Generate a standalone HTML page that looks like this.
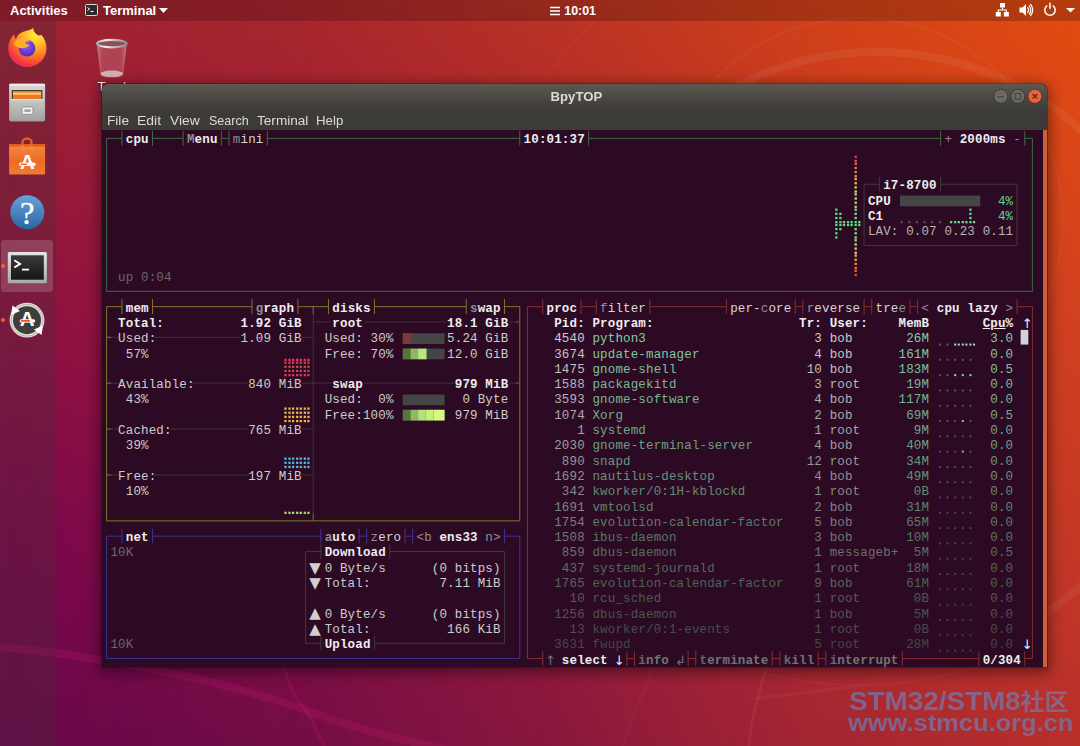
<!DOCTYPE html>
<html lang="en"><head><meta charset="utf-8"><title>BpyTOP</title>
<style>
*{margin:0;padding:0;box-sizing:border-box}
html,body{width:1080px;height:746px;overflow:hidden}
body{position:relative;font-family:"Liberation Sans",sans-serif;background:linear-gradient(to bottom,#a02231 0%,#8c1042 48%,#7c084a 72%,#6a084a 100%)}
#bgr{position:absolute;left:0;top:0;width:1080px;height:746px;background:linear-gradient(to bottom,#e24c10 0%,#d04020 45%,#b8302a 100%);-webkit-mask-image:linear-gradient(to right,rgba(0,0,0,0) 0%,rgba(0,0,0,0.05) 14%,rgba(0,0,0,0.135) 28%,rgba(0,0,0,0.385) 50%,rgba(0,0,0,0.72) 74%,rgba(0,0,0,1) 100%);mask-image:linear-gradient(to right,rgba(0,0,0,0) 0%,rgba(0,0,0,0.05) 14%,rgba(0,0,0,0.135) 28%,rgba(0,0,0,0.385) 50%,rgba(0,0,0,0.72) 74%,rgba(0,0,0,1) 100%)}
.abs{position:absolute}
#wall{position:absolute;left:0;top:0;width:1080px;height:746px}
#topbar{position:absolute;left:0;top:0;width:1080px;height:20.5px;background:rgba(0,0,0,0.2);color:#fff;font-size:13px;font-weight:bold}
#topbar span{position:absolute;top:0.8px;height:20px;line-height:20px;white-space:pre}
#dock{position:absolute;left:0;top:20.5px;width:55.5px;height:726px;background:rgba(70,45,60,0.3)}
#win{position:absolute;left:102px;top:84.3px;width:944.8px;height:582.3px;border-radius:6px 6px 0 0;
 box-shadow:0 3px 13px 3px rgba(0,0,0,0.42), 0 0 0 0.6px rgba(30,10,10,0.5);background:#2d0a23;overflow:hidden}
#titlebar{position:absolute;left:0;top:0;width:100%;height:26px;background:linear-gradient(#5b5952 0%,#524f49 30%,#46443f 68%,#3d3c38 100%);}
#title{position:absolute;left:0;width:100%;top:0.5px;height:26px;line-height:25px;text-align:center;color:#dfdbd2;font-weight:bold;font-size:12.6px;padding-left:4px;transform:scaleX(1.045);transform-origin:474px 0}
#menubar{position:absolute;left:0;top:26px;width:100%;height:19.9px;background:#3c3b37;color:#dfdbd2;font-size:12.6px}
#menubar span{position:absolute;top:0.4px;line-height:20px;white-space:pre;transform-origin:0 0}
#sb{position:absolute;right:0;top:45.9px;width:4.3px;bottom:0;background:#cd6038}
.tsvg{position:absolute;left:0;top:0}
.tt{position:absolute;left:0;top:0;width:1080px;height:746px;font-family:"Liberation Mono","DejaVu Sans Mono",monospace}
.wm{line-height:1;position:absolute;color:rgba(98,142,205,0.57);font-weight:bold;white-space:pre;transform-origin:0 0;font-family:"Liberation Sans","Noto Sans CJK SC",sans-serif}

.t{position:absolute;white-space:pre;height:15.3px;line-height:16.5px;font-size:12.5px;letter-spacing:0.1498px;}
</style></head><body>
<div id="bgr"></div>
<svg id="wall" viewBox="0 0 1080 746">
 <g fill="none" stroke="#ffffff">
  <circle cx="860" cy="300" r="385" stroke-opacity="0.035" stroke-width="1.5"/>
  <circle cx="860" cy="221" r="203" stroke-opacity="0.05" stroke-width="1.5"/>
  <circle cx="877" cy="358" r="306" stroke-opacity="0.06" stroke-width="8"/>
  <path d="M0 647 C 60 652 200 672 305 710 S 430 740 480 762" stroke="#d01878" stroke-opacity="0.22" stroke-width="8"/>
  <path d="M283 664 C 290 690 300 705 308 713 L 326 750" stroke="#d01878" stroke-opacity="0.2" stroke-width="3"/>
  <path d="M767 664 C 760 690 752 715 748 750" stroke-opacity="0.05" stroke-width="3"/>
  <path d="M753 699 C 790 694 830 690 870 684" stroke-opacity="0.04" stroke-width="3"/>
  <path d="M656 664 C 640 700 630 720 622 750" stroke-opacity="0.03" stroke-width="2"/>
 </g>
</svg>
<div id="topbar">
 <span style="left:10px">Activities</span>
 <svg class="abs" style="left:85px;top:4px" width="13" height="12" viewBox="0 0 13 12"><rect x="0.5" y="0.5" width="12" height="11" rx="1" fill="#2b2b2b" stroke="#d8d8d8"/><path d="M2.5 3.5l2 1.5-2 1.5M5.5 7.5h3" stroke="#fff" stroke-width="1" fill="none"/></svg>
 <span style="left:103px">Terminal</span>
 <svg class="abs" style="left:159px;top:8px" width="9" height="5" viewBox="0 0 9 5"><path d="M0 0h9L4.5 5z" fill="#fff"/></svg>
 <svg class="abs" style="left:550px;top:5.5px" width="10" height="10" viewBox="0 0 10 10"><path d="M0 1.5h10M0 5h10M0 8.5h10" stroke="#fff" stroke-width="1.4"/></svg>
 <span style="left:564.3px;font-size:12.4px">10:01</span>
 <svg class="abs" style="left:995px;top:3px" width="15" height="14" viewBox="0 0 15 14"><g fill="#fff"><rect x="5" y="0" width="5" height="4.5"/><rect x="0.8" y="9" width="5" height="4.5"/><rect x="8.8" y="9" width="5" height="4.5"/></g><path d="M7.5 4.5v2.5M3.3 9V7h8v2" stroke="#fff" stroke-width="1.2" fill="none"/></svg>
 <svg class="abs" style="left:1019px;top:3px" width="15" height="14" viewBox="0 0 15 14"><path d="M0.5 4.5h3L7 1v12L3.5 9.5h-3z" fill="#fff"/><path d="M8.4 4.4a3.8 3.8 0 0 1 0 5.2M9.9 2.6a6.2 6.2 0 0 1 0 8.8M11.3 1a8.6 8.6 0 0 1 0 12" stroke="#fff" stroke-width="1.3" fill="none"/></svg>
 <svg class="abs" style="left:1043px;top:2px" width="14" height="15" viewBox="0 0 14 15"><path d="M4.3 3.6a5.2 5.2 0 1 0 5.4 0" stroke="#fff" stroke-width="1.5" fill="none"/><path d="M7 0.8v6" stroke="#fff" stroke-width="1.6"/></svg>
 <svg class="abs" style="left:1065.5px;top:7.5px" width="9" height="5" viewBox="0 0 9 5"><path d="M0 0h9L4.5 4.6z" fill="#fff"/></svg>
</div>
<div id="dock">
 <div class="abs" style="left:1.2px;top:219.2px;width:52.1px;height:52.5px;border-radius:3px;background:rgba(255,255,255,0.16)"></div>
 <div class="abs" style="left:0.6px;top:243.2px;width:4.6px;height:4.6px;border-radius:2.3px;background:#f0602a"></div>
 <div class="abs" style="left:0.6px;top:297.4px;width:4.6px;height:4.6px;border-radius:2.3px;background:#f0602a"></div>
</div>
<!-- dock icons -->
<svg class="abs" style="left:0;top:0" width="140" height="350" viewBox="0 0 140 350">
 <defs>
  <radialGradient id="ffo" cx="0.72" cy="0.16" r="1.0"><stop offset="0" stop-color="#fff23a"/><stop offset="0.28" stop-color="#ffbd2a"/><stop offset="0.55" stop-color="#ff7a22"/><stop offset="0.8" stop-color="#f5363f"/><stop offset="1" stop-color="#e01f86"/></radialGradient>
  <radialGradient id="ffp" cx="0.45" cy="0.35" r="0.7"><stop offset="0" stop-color="#9a5cf5"/><stop offset="0.6" stop-color="#6a3bd6"/><stop offset="1" stop-color="#3f2aa8"/></radialGradient>
  <linearGradient id="fl" x1="0" y1="0" x2="0" y2="1"><stop offset="0" stop-color="#d9d9d7"/><stop offset="1" stop-color="#9c9c9a"/></linearGradient>
  <linearGradient id="fl2" x1="0" y1="0" x2="0" y2="1"><stop offset="0" stop-color="#c9c9c7"/><stop offset="1" stop-color="#a2a2a0"/></linearGradient>
  <linearGradient id="sw" x1="0" y1="0" x2="0" y2="1"><stop offset="0" stop-color="#f28a46"/><stop offset="0.55" stop-color="#ee6c25"/><stop offset="1" stop-color="#f07a34"/></linearGradient>
  <linearGradient id="hp" x1="0" y1="0" x2="0" y2="1"><stop offset="0" stop-color="#65a3d8"/><stop offset="1" stop-color="#2b66a4"/></linearGradient>
  <linearGradient id="tm" x1="0" y1="0" x2="0" y2="1"><stop offset="0" stop-color="#3a3a3a"/><stop offset="1" stop-color="#161616"/></linearGradient>
  <linearGradient id="tf" x1="0" y1="0" x2="0" y2="1"><stop offset="0" stop-color="#e4e4e2"/><stop offset="1" stop-color="#a8a8a4"/></linearGradient>
  <linearGradient id="tr" x1="0" y1="0" x2="1" y2="0"><stop offset="0" stop-color="#e8c8cc" stop-opacity="0.55"/><stop offset="0.18" stop-color="#d08890" stop-opacity="0.35"/><stop offset="0.5" stop-color="#d89098" stop-opacity="0.30"/><stop offset="0.82" stop-color="#d08890" stop-opacity="0.35"/><stop offset="1" stop-color="#e8c8cc" stop-opacity="0.55"/></linearGradient>
  <linearGradient id="rim" x1="0" y1="0" x2="1" y2="0"><stop offset="0" stop-color="#a8a8a8"/><stop offset="0.3" stop-color="#f0f0f0"/><stop offset="0.6" stop-color="#bcbcbc"/><stop offset="1" stop-color="#8c8c8c"/></linearGradient>
 </defs>
 <!-- firefox -->
 <path d="M33.200 28.100c.2 3 1.600 5 3.600 6.500 1.300 1 3 1.200 4.400.2 3.300 3.500 5.300 8.200 5.300 13.400C46.500 58.700 38 67 27.300 67S8.100 58.700 8.100 48.200c0-5 2.200-9.800 6-13.900.2 2 .8 3.700 1.800 5 .9-3.600 3.300-6.200 6.600-7.400 3-1 7.600-1.200 10.700-3.800z" fill="url(#ffo)"/>
 <circle cx="27" cy="48.300" r="8.300" fill="url(#ffp)"/>
 <path d="M13.300 44.500c1.500-3.700 4.700-6 8.900-6.200 3.500-.2 6.200 1 8.400 3.400-2.300-.4-4.300 0-5.600 1.300 1.500.9 3.400 1.300 4.500 2.700-2 .5-3.500 2.600-6.600 2.600-4 0-6.800-1.400-9.600-3.800z" fill="#ffae2c"/>
 <!-- files -->
 <rect x="9.100" y="83.700" width="36" height="37.800" rx="2" fill="url(#fl)"/>
 <rect x="9.100" y="83.700" width="36" height="2" rx="1" fill="#ededeb"/>
 <rect x="11.800" y="90" width="30.600" height="9.500" fill="#4a3a30"/>
 <rect x="13" y="91.200" width="28.200" height="8" fill="#f39a3c"/>
 <rect x="13" y="93.300" width="28.200" height="1" fill="#fde6c8"/>
 <rect x="13" y="95" width="28.200" height="4.500" fill="#ea7a26"/>
 <rect x="10.400" y="99" width="33.400" height="21.600" rx="1.200" fill="url(#fl2)"/>
 <rect x="10.400" y="99" width="33.400" height="1.200" fill="#dededc"/>
 <rect x="22" y="107" width="11" height="7.300" rx="1.400" fill="#f4f4f2" stroke="#8a8a88" stroke-width="0.900"/>
 <rect x="24.300" y="109.400" width="6.400" height="2.400" fill="#9a9a98"/>
 <!-- software -->
 <path d="M22.500 150v-8a4.500 3.400 0 0 1 9 0v8" fill="none" stroke="#e2621f" stroke-width="2.300"/>
 <rect x="9.100" y="144" width="36" height="30.600" rx="0.800" fill="url(#sw)"/>
 <rect x="9.100" y="144" width="36" height="2.600" fill="#e0601c"/>
 <path d="M22.500 150v-4.500M31.500 150v-4.500" stroke="#f08a48" stroke-width="2.300"/>
 <text x="27.300" y="169" text-anchor="middle" font-family="Liberation Sans,sans-serif" font-weight="bold" font-size="20.500" fill="#fff">A</text>
 <rect x="19" y="162.600" width="16.600" height="3.400" rx="1.700" fill="#fff"/>
 <rect x="20.200" y="163.600" width="7" height="1.400" rx="0.700" fill="#ef6c25"/>
 <!-- help -->
 <circle cx="27.300" cy="212.200" r="17" fill="url(#hp)"/>
 <text x="27.300" y="224.300" text-anchor="middle" font-family="Liberation Serif,serif" font-size="32.500" fill="#fff" stroke="#fff" stroke-width="0.300">?</text>
 <!-- terminal -->
 <rect x="7.800" y="252" width="39.100" height="31.300" rx="1.500" fill="url(#tf)"/>
 <rect x="11" y="255.300" width="32.800" height="24.400" fill="url(#tm)"/>
 <path d="M14.300 260.300l5.800 3.600-5.800 3.600" stroke="#fff" stroke-width="1.900" fill="none"/><path d="M22 269.600h7" stroke="#fff" stroke-width="1.800"/>
 <!-- updater -->
 <circle cx="27" cy="320.200" r="17.400" fill="#deded9"/>
 <circle cx="27" cy="320.200" r="16" fill="none" stroke="#b8b8b2" stroke-width="1"/>
 <circle cx="27" cy="320.200" r="14" fill="#3f3e3a"/>
 <path d="M11 315l1.500-9.500 7.500 5.500zM43 325.500l-1.500 9.500-7.500-5.500z" fill="#fff"/>
 <text x="27.200" y="326.200" text-anchor="middle" font-family="Liberation Sans,sans-serif" font-weight="bold" font-size="20.500" fill="#fff">A</text>
 <rect x="19.600" y="319.300" width="15.600" height="3.200" rx="1.600" fill="#fff"/>
 <rect x="20.600" y="320.100" width="9.500" height="1.600" rx="0.800" fill="#f0501e"/>
 <!-- trash -->
 <path d="M97 45.500L100.400 74.500a11.400 3.600 0 0 0 22.800 0L126.600 45.500z" fill="url(#tr)"/>
 <ellipse cx="111.800" cy="73.800" rx="11.200" ry="3.300" fill="#d9c3c7" fill-opacity="0.85"/>
 <ellipse cx="111.800" cy="43.600" rx="14.800" ry="3.700" fill="#915058" stroke="url(#rim)" stroke-width="2.200"/>
</svg>
<div class="abs" style="left:97.4px;top:80.3px;color:#fff;font-size:13px;line-height:14px;text-shadow:0 1px 2px rgba(0,0,0,0.8)">Trash</div>
<div id="win">
 <div id="titlebar"></div>
 <div id="title">BpyTOP</div>
 <svg class="abs" style="left:888px;top:4px" width="54" height="18" viewBox="0 0 54 18">
  <circle cx="10.800" cy="8.300" r="7" fill="#6b6963" stroke="#34332f" stroke-width="0.800"/><path d="M7.600 8.800h6.400" stroke="#3f3e3a" stroke-width="1"/>
  <circle cx="27.900" cy="8.300" r="7" fill="#6b6963" stroke="#34332f" stroke-width="0.800"/><rect x="25.100" y="5.500" width="5.600" height="5.600" fill="none" stroke="#3f3e3a" stroke-width="1"/>
  <circle cx="44.900" cy="8.300" r="7" fill="#e9633c" stroke="#5a2c1c" stroke-width="0.800"/><path d="M42.600 6l4.600 4.600M47.200 6l-4.600 4.600" stroke="#4a2418" stroke-width="1.100"/>
 </svg>
 <div id="menubar"><span style="left:4.6px;transform:scaleX(1.083)">File</span><span style="left:34.9px;transform:scaleX(1.110)">Edit</span><span style="left:67.8px;transform:scaleX(1.10)">View</span><span style="left:106.5px;transform:scaleX(0.995)">Search</span><span style="left:155.1px;transform:scaleX(1.08)">Terminal</span><span style="left:214.3px;transform:scaleX(1.054)">Help</span></div>
 <div id="sb"></div>
</div>
<svg class="tsvg" width="1080" height="746" viewBox="0 0 1080 746">
<path d="M106.63 138.35L121.93 138.35M121.93 130.90L121.93 145.80M152.53 130.90L152.53 145.80M152.53 138.35L183.14 138.35M183.14 130.90L183.14 145.80M221.39 130.90L221.39 145.80M221.39 138.35L229.04 138.35M229.04 130.90L229.04 145.80M267.30 130.90L267.30 145.80M267.30 138.35L519.78 138.35M519.78 130.90L519.78 145.80M588.64 130.90L588.64 145.80M588.64 138.35L940.58 138.35M940.58 130.90L940.58 145.80M1024.75 130.90L1024.75 145.80M1024.75 138.35L1032.40 138.35M106.63 138.35L106.63 291.35M1032.40 138.35L1032.40 291.35M106.63 291.35L1032.40 291.35" stroke="#3d7b46" stroke-width="0.95" stroke-opacity="0.9" fill="none" stroke-linecap="butt"/>
<path d="M864.07 184.25L879.38 184.25M879.38 176.80L879.38 191.70M940.58 176.80L940.58 191.70M940.58 184.25L1017.09 184.25M864.07 184.25L864.07 245.45M1017.09 184.25L1017.09 245.45M864.07 245.45L1017.09 245.45M305.55 551.45L320.85 551.45M320.85 544.00L320.85 558.90M389.71 544.00L389.71 558.90M389.71 551.45L504.48 551.45M305.55 551.45L305.55 643.25M504.48 551.45L504.48 643.25M305.55 643.25L320.85 643.25M320.85 635.80L320.85 650.70M374.41 635.80L374.41 650.70M374.41 643.25L504.48 643.25" stroke="#424242" stroke-width="0.95" stroke-opacity="0.9" fill="none" stroke-linecap="butt"/>
<path d="M106.63 306.65L121.93 306.65M121.93 299.20L121.93 314.10M152.53 299.20L152.53 314.10M152.53 306.65L251.99 306.65M251.99 299.20L251.99 314.10M297.90 299.20L297.90 314.10M297.90 306.65L328.50 306.65M328.50 299.20L328.50 314.10M374.41 299.20L374.41 314.10M374.41 306.65L466.22 306.65M466.22 299.20L466.22 314.10M504.48 299.20L504.48 314.10M504.48 306.65L519.78 306.65M106.63 306.65L106.63 520.85M519.78 306.65L519.78 520.85M106.63 520.85L519.78 520.85M313.20 306.65L313.20 314.30M313.20 513.20L313.20 520.85M106.63 337.25L111.45 337.25M106.63 383.15L111.45 383.15M106.63 429.05L111.45 429.05M106.63 474.95L111.45 474.95M515.78 321.95L519.78 321.95M515.78 383.15L519.78 383.15" stroke="#8a882e" stroke-width="0.95" stroke-opacity="0.9" fill="none" stroke-linecap="butt"/>
<path d="M313.20 314.30L313.20 514.73M111.45 337.25L313.20 337.25M111.45 383.15L313.20 383.15M111.45 429.05L313.20 429.05M111.45 474.95L313.20 474.95M313.20 321.95L519.78 321.95M313.20 383.15L519.78 383.15" stroke="#3c3c3c" stroke-width="0.95" stroke-opacity="0.9" fill="none" stroke-linecap="butt"/>
<path d="M106.63 536.15L121.93 536.15M121.93 528.70L121.93 543.60M152.53 528.70L152.53 543.60M152.53 536.15L320.85 536.15M320.85 528.70L320.85 543.60M359.11 528.70L359.11 543.60M359.11 536.15L366.76 536.15M366.76 528.70L366.76 543.60M405.01 528.70L405.01 543.60M405.01 536.15L412.67 536.15M412.67 528.70L412.67 543.60M504.48 528.70L504.48 543.60M504.48 536.15L519.78 536.15M106.63 536.15L106.63 658.55M519.78 536.15L519.78 658.55M106.63 658.55L519.78 658.55" stroke="#423ba5" stroke-width="0.95" stroke-opacity="0.9" fill="none" stroke-linecap="butt"/>
<path d="M527.43 306.65L542.73 306.65M542.73 299.20L542.73 314.10M580.99 299.20L580.99 314.10M580.99 306.65L596.29 306.65M596.29 299.20L596.29 314.10M649.85 299.20L649.85 314.10M649.85 306.65L726.36 306.65M726.36 299.20L726.36 314.10M795.22 299.20L795.22 314.10M795.22 306.65L802.87 306.65M802.87 299.20L802.87 314.10M864.07 299.20L864.07 314.10M864.07 306.65L871.73 306.65M871.73 299.20L871.73 314.10M909.98 299.20L909.98 314.10M909.98 306.65L917.63 306.65M917.63 299.20L917.63 314.10M1017.09 299.20L1017.09 314.10M1017.09 306.65L1032.40 306.65M527.43 306.65L527.43 658.55M1032.40 306.65L1032.40 658.55M527.43 658.55L542.73 658.55M542.73 651.10L542.73 666.00M626.89 651.10L626.89 666.00M626.89 658.55L634.54 658.55M634.54 651.10L634.54 666.00M688.10 651.10L688.10 666.00M688.10 658.55L695.75 658.55M695.75 651.10L695.75 666.00M772.26 651.10L772.26 666.00M772.26 658.55L779.91 658.55M779.91 651.10L779.91 666.00M818.17 651.10L818.17 666.00M818.17 658.55L825.82 658.55M825.82 651.10L825.82 666.00M902.33 651.10L902.33 666.00M902.33 658.55L978.84 658.55M978.84 651.10L978.84 666.00M1024.75 651.10L1024.75 666.00M1024.75 658.55L1032.40 658.55" stroke="#923535" stroke-width="0.95" stroke-opacity="0.9" fill="none" stroke-linecap="butt"/>
<rect x="900.00" y="195.60" width="80.20" height="10.70" fill="#454545"/>
<rect x="900.45" y="221.00" width="2.30" height="2.30" fill="#4a4a4a"/>
<rect x="908.11" y="221.00" width="2.30" height="2.30" fill="#4a4a4a"/>
<rect x="915.76" y="221.00" width="2.30" height="2.30" fill="#4a4a4a"/>
<rect x="923.41" y="221.00" width="2.30" height="2.30" fill="#4a4a4a"/>
<rect x="931.06" y="221.00" width="2.30" height="2.30" fill="#4a4a4a"/>
<rect x="938.71" y="221.00" width="2.30" height="2.30" fill="#4a4a4a"/>
<rect x="949.96" y="221.00" width="2.30" height="2.30" fill="#5fd98a"/>
<rect x="954.01" y="221.00" width="2.30" height="2.30" fill="#5fd98a"/>
<rect x="957.61" y="221.00" width="2.30" height="2.30" fill="#5fd98a"/>
<rect x="961.66" y="221.00" width="2.30" height="2.30" fill="#5fd98a"/>
<rect x="965.26" y="221.00" width="2.30" height="2.30" fill="#5fd98a"/>
<rect x="969.31" y="221.00" width="2.30" height="2.30" fill="#5fd98a"/>
<rect x="972.91" y="221.00" width="2.30" height="2.30" fill="#5fd98a"/>
<rect x="969.31" y="208.55" width="2.30" height="2.30" fill="#5fd98a"/>
<rect x="969.31" y="212.70" width="2.30" height="2.30" fill="#5fd98a"/>
<rect x="969.31" y="216.85" width="2.30" height="2.30" fill="#5fd98a"/>
<rect x="854.55" y="221.00" width="2.30" height="2.30" fill="#58e08a"/>
<rect x="854.55" y="216.85" width="2.30" height="2.30" fill="#69df85"/>
<rect x="854.55" y="212.70" width="2.30" height="2.30" fill="#79de80"/>
<rect x="854.55" y="208.55" width="2.30" height="2.30" fill="#8add7b"/>
<rect x="854.55" y="205.70" width="2.30" height="2.30" fill="#9adc76"/>
<rect x="854.55" y="201.55" width="2.30" height="2.30" fill="#abdb71"/>
<rect x="854.55" y="197.40" width="2.30" height="2.30" fill="#bcda6d"/>
<rect x="854.55" y="193.25" width="2.30" height="2.30" fill="#ccd968"/>
<rect x="854.55" y="190.40" width="2.30" height="2.30" fill="#ddd963"/>
<rect x="854.55" y="186.25" width="2.30" height="2.30" fill="#e7d15d"/>
<rect x="854.55" y="182.10" width="2.30" height="2.30" fill="#e8c056"/>
<rect x="854.55" y="177.95" width="2.30" height="2.30" fill="#eaaf4e"/>
<rect x="854.55" y="175.10" width="2.30" height="2.30" fill="#eb9f47"/>
<rect x="854.55" y="170.95" width="2.30" height="2.30" fill="#ed8e40"/>
<rect x="854.55" y="166.80" width="2.30" height="2.30" fill="#ee7e39"/>
<rect x="854.55" y="162.65" width="2.30" height="2.30" fill="#f06d31"/>
<rect x="854.55" y="159.80" width="2.30" height="2.30" fill="#ee552f"/>
<rect x="854.55" y="155.65" width="2.30" height="2.30" fill="#eb3b2d"/>
<rect x="854.55" y="223.85" width="2.30" height="2.30" fill="#58e08a"/>
<rect x="854.55" y="228.00" width="2.30" height="2.30" fill="#6ddf84"/>
<rect x="854.55" y="232.15" width="2.30" height="2.30" fill="#82de7e"/>
<rect x="854.55" y="236.30" width="2.30" height="2.30" fill="#97dc77"/>
<rect x="854.55" y="239.15" width="2.30" height="2.30" fill="#acdb71"/>
<rect x="854.55" y="243.30" width="2.30" height="2.30" fill="#c1da6b"/>
<rect x="854.55" y="247.45" width="2.30" height="2.30" fill="#d6d965"/>
<rect x="854.55" y="251.60" width="2.30" height="2.30" fill="#e6d35e"/>
<rect x="854.55" y="254.45" width="2.30" height="2.30" fill="#e8be55"/>
<rect x="854.55" y="258.60" width="2.30" height="2.30" fill="#eaa94b"/>
<rect x="854.55" y="262.75" width="2.30" height="2.30" fill="#ec9442"/>
<rect x="854.55" y="266.90" width="2.30" height="2.30" fill="#ee7f39"/>
<rect x="854.55" y="269.75" width="2.30" height="2.30" fill="#f06a30"/>
<rect x="854.55" y="273.90" width="2.30" height="2.30" fill="#ec492e"/>
<rect x="835.20" y="208.55" width="2.30" height="2.30" fill="#62dc74"/>
<rect x="835.20" y="223.85" width="2.30" height="2.30" fill="#62dc74"/>
<rect x="835.20" y="212.70" width="2.30" height="2.30" fill="#62dc74"/>
<rect x="835.20" y="228.00" width="2.30" height="2.30" fill="#62dc74"/>
<rect x="835.20" y="216.85" width="2.30" height="2.30" fill="#62dc74"/>
<rect x="835.20" y="232.15" width="2.30" height="2.30" fill="#62dc74"/>
<rect x="835.20" y="221.00" width="2.30" height="2.30" fill="#62dc74"/>
<rect x="835.20" y="236.30" width="2.30" height="2.30" fill="#62dc74"/>
<rect x="839.25" y="212.70" width="2.30" height="2.30" fill="#62dc74"/>
<rect x="839.25" y="216.85" width="2.30" height="2.30" fill="#62dc74"/>
<rect x="839.25" y="221.00" width="2.30" height="2.30" fill="#62dc74"/>
<rect x="839.25" y="223.85" width="2.30" height="2.30" fill="#62dc74"/>
<rect x="839.25" y="228.00" width="2.30" height="2.30" fill="#62dc74"/>
<rect x="842.85" y="221.00" width="2.30" height="2.30" fill="#62dc74"/>
<rect x="842.85" y="223.85" width="2.30" height="2.30" fill="#62dc74"/>
<rect x="846.90" y="221.00" width="2.30" height="2.30" fill="#62dc74"/>
<rect x="846.90" y="223.85" width="2.30" height="2.30" fill="#62dc74"/>
<rect x="850.50" y="221.00" width="2.30" height="2.30" fill="#62dc74"/>
<rect x="850.50" y="223.85" width="2.30" height="2.30" fill="#62dc74"/>
<rect x="858.15" y="221.00" width="2.30" height="2.30" fill="#62dc74"/>
<rect x="858.15" y="223.85" width="2.30" height="2.30" fill="#62dc74"/>
<rect x="118.60" y="330.60" width="35.75" height="13.30" fill="#2d0a23"/>
<rect x="240.82" y="330.60" width="60.61" height="13.30" fill="#2d0a23"/>
<rect x="118.60" y="376.50" width="74.01" height="13.30" fill="#2d0a23"/>
<rect x="248.47" y="376.50" width="52.96" height="13.30" fill="#2d0a23"/>
<rect x="118.60" y="422.40" width="51.06" height="13.30" fill="#2d0a23"/>
<rect x="248.47" y="422.40" width="52.96" height="13.30" fill="#2d0a23"/>
<rect x="118.60" y="468.30" width="35.75" height="13.30" fill="#2d0a23"/>
<rect x="248.47" y="468.30" width="52.96" height="13.30" fill="#2d0a23"/>
<rect x="284.32" y="358.70" width="2.30" height="2.30" fill="#e8325c"/>
<rect x="284.32" y="361.55" width="2.30" height="2.30" fill="#c4444f"/>
<rect x="284.32" y="365.70" width="2.30" height="2.30" fill="#c4444f"/>
<rect x="284.32" y="369.85" width="2.30" height="2.30" fill="#c4444f"/>
<rect x="284.32" y="374.00" width="2.30" height="2.30" fill="#c4444f"/>
<rect x="284.32" y="407.45" width="2.30" height="2.30" fill="#e9b648"/>
<rect x="284.32" y="411.60" width="2.30" height="2.30" fill="#e9b648"/>
<rect x="284.32" y="415.75" width="2.30" height="2.30" fill="#e9b648"/>
<rect x="284.32" y="419.90" width="2.30" height="2.30" fill="#e9b648"/>
<rect x="284.32" y="457.50" width="2.30" height="2.30" fill="#4ab8e6"/>
<rect x="284.32" y="461.65" width="2.30" height="2.30" fill="#4ab8e6"/>
<rect x="284.32" y="465.80" width="2.30" height="2.30" fill="#4ab8e6"/>
<rect x="284.32" y="511.70" width="2.30" height="2.30" fill="#a6d674"/>
<rect x="288.37" y="358.70" width="2.30" height="2.30" fill="#e8325c"/>
<rect x="288.37" y="361.55" width="2.30" height="2.30" fill="#c4444f"/>
<rect x="288.37" y="365.70" width="2.30" height="2.30" fill="#c4444f"/>
<rect x="288.37" y="369.85" width="2.30" height="2.30" fill="#c4444f"/>
<rect x="288.37" y="374.00" width="2.30" height="2.30" fill="#c4444f"/>
<rect x="288.37" y="407.45" width="2.30" height="2.30" fill="#e9b648"/>
<rect x="288.37" y="411.60" width="2.30" height="2.30" fill="#e9b648"/>
<rect x="288.37" y="415.75" width="2.30" height="2.30" fill="#e9b648"/>
<rect x="288.37" y="419.90" width="2.30" height="2.30" fill="#e9b648"/>
<rect x="288.37" y="457.50" width="2.30" height="2.30" fill="#4ab8e6"/>
<rect x="288.37" y="461.65" width="2.30" height="2.30" fill="#4ab8e6"/>
<rect x="288.37" y="465.80" width="2.30" height="2.30" fill="#4ab8e6"/>
<rect x="288.37" y="511.70" width="2.30" height="2.30" fill="#a6d674"/>
<rect x="291.97" y="358.70" width="2.30" height="2.30" fill="#e8325c"/>
<rect x="291.97" y="361.55" width="2.30" height="2.30" fill="#c4444f"/>
<rect x="291.97" y="365.70" width="2.30" height="2.30" fill="#c4444f"/>
<rect x="291.97" y="369.85" width="2.30" height="2.30" fill="#c4444f"/>
<rect x="291.97" y="374.00" width="2.30" height="2.30" fill="#c4444f"/>
<rect x="291.97" y="407.45" width="2.30" height="2.30" fill="#e9b648"/>
<rect x="291.97" y="411.60" width="2.30" height="2.30" fill="#e9b648"/>
<rect x="291.97" y="415.75" width="2.30" height="2.30" fill="#e9b648"/>
<rect x="291.97" y="419.90" width="2.30" height="2.30" fill="#e9b648"/>
<rect x="291.97" y="457.50" width="2.30" height="2.30" fill="#4ab8e6"/>
<rect x="291.97" y="461.65" width="2.30" height="2.30" fill="#4ab8e6"/>
<rect x="291.97" y="465.80" width="2.30" height="2.30" fill="#4ab8e6"/>
<rect x="291.97" y="511.70" width="2.30" height="2.30" fill="#a6d674"/>
<rect x="296.03" y="358.70" width="2.30" height="2.30" fill="#e8325c"/>
<rect x="296.03" y="361.55" width="2.30" height="2.30" fill="#c4444f"/>
<rect x="296.03" y="365.70" width="2.30" height="2.30" fill="#c4444f"/>
<rect x="296.03" y="369.85" width="2.30" height="2.30" fill="#c4444f"/>
<rect x="296.03" y="374.00" width="2.30" height="2.30" fill="#c4444f"/>
<rect x="296.03" y="407.45" width="2.30" height="2.30" fill="#e9b648"/>
<rect x="296.03" y="411.60" width="2.30" height="2.30" fill="#e9b648"/>
<rect x="296.03" y="415.75" width="2.30" height="2.30" fill="#e9b648"/>
<rect x="296.03" y="419.90" width="2.30" height="2.30" fill="#e9b648"/>
<rect x="296.03" y="457.50" width="2.30" height="2.30" fill="#4ab8e6"/>
<rect x="296.03" y="461.65" width="2.30" height="2.30" fill="#4ab8e6"/>
<rect x="296.03" y="465.80" width="2.30" height="2.30" fill="#4ab8e6"/>
<rect x="296.03" y="511.70" width="2.30" height="2.30" fill="#a6d674"/>
<rect x="299.63" y="358.70" width="2.30" height="2.30" fill="#e8325c"/>
<rect x="299.63" y="361.55" width="2.30" height="2.30" fill="#c4444f"/>
<rect x="299.63" y="365.70" width="2.30" height="2.30" fill="#c4444f"/>
<rect x="299.63" y="369.85" width="2.30" height="2.30" fill="#c4444f"/>
<rect x="299.63" y="374.00" width="2.30" height="2.30" fill="#c4444f"/>
<rect x="299.63" y="407.45" width="2.30" height="2.30" fill="#e9b648"/>
<rect x="299.63" y="411.60" width="2.30" height="2.30" fill="#e9b648"/>
<rect x="299.63" y="415.75" width="2.30" height="2.30" fill="#e9b648"/>
<rect x="299.63" y="419.90" width="2.30" height="2.30" fill="#e9b648"/>
<rect x="299.63" y="457.50" width="2.30" height="2.30" fill="#4ab8e6"/>
<rect x="299.63" y="461.65" width="2.30" height="2.30" fill="#4ab8e6"/>
<rect x="299.63" y="465.80" width="2.30" height="2.30" fill="#4ab8e6"/>
<rect x="299.63" y="511.70" width="2.30" height="2.30" fill="#a6d674"/>
<rect x="303.68" y="358.70" width="2.30" height="2.30" fill="#e8325c"/>
<rect x="303.68" y="361.55" width="2.30" height="2.30" fill="#c4444f"/>
<rect x="303.68" y="365.70" width="2.30" height="2.30" fill="#c4444f"/>
<rect x="303.68" y="369.85" width="2.30" height="2.30" fill="#c4444f"/>
<rect x="303.68" y="374.00" width="2.30" height="2.30" fill="#c4444f"/>
<rect x="303.68" y="407.45" width="2.30" height="2.30" fill="#e9b648"/>
<rect x="303.68" y="411.60" width="2.30" height="2.30" fill="#e9b648"/>
<rect x="303.68" y="415.75" width="2.30" height="2.30" fill="#e9b648"/>
<rect x="303.68" y="419.90" width="2.30" height="2.30" fill="#e9b648"/>
<rect x="303.68" y="457.50" width="2.30" height="2.30" fill="#4ab8e6"/>
<rect x="303.68" y="461.65" width="2.30" height="2.30" fill="#4ab8e6"/>
<rect x="303.68" y="465.80" width="2.30" height="2.30" fill="#4ab8e6"/>
<rect x="303.68" y="511.70" width="2.30" height="2.30" fill="#a6d674"/>
<rect x="307.28" y="358.70" width="2.30" height="2.30" fill="#e8325c"/>
<rect x="307.28" y="361.55" width="2.30" height="2.30" fill="#c4444f"/>
<rect x="307.28" y="365.70" width="2.30" height="2.30" fill="#c4444f"/>
<rect x="307.28" y="369.85" width="2.30" height="2.30" fill="#c4444f"/>
<rect x="307.28" y="374.00" width="2.30" height="2.30" fill="#c4444f"/>
<rect x="307.28" y="407.45" width="2.30" height="2.30" fill="#e9b648"/>
<rect x="307.28" y="411.60" width="2.30" height="2.30" fill="#e9b648"/>
<rect x="307.28" y="415.75" width="2.30" height="2.30" fill="#e9b648"/>
<rect x="307.28" y="419.90" width="2.30" height="2.30" fill="#e9b648"/>
<rect x="307.28" y="457.50" width="2.30" height="2.30" fill="#4ab8e6"/>
<rect x="307.28" y="461.65" width="2.30" height="2.30" fill="#4ab8e6"/>
<rect x="307.28" y="465.80" width="2.30" height="2.30" fill="#4ab8e6"/>
<rect x="307.28" y="511.70" width="2.30" height="2.30" fill="#a6d674"/>
<rect x="331.33" y="315.30" width="32.60" height="13.30" fill="#2d0a23"/>
<rect x="446.10" y="315.30" width="63.21" height="13.30" fill="#2d0a23"/>
<rect x="331.33" y="376.50" width="32.60" height="13.30" fill="#2d0a23"/>
<rect x="453.75" y="376.50" width="55.56" height="13.30" fill="#2d0a23"/>
<rect x="402.79" y="333.30" width="41.80" height="10.70" fill="#454545"/>
<rect x="402.79" y="333.30" width="8.45" height="10.70" fill="#7a3a3c"/>
<rect x="402.79" y="348.60" width="41.80" height="10.70" fill="#454545"/>
<rect x="402.79" y="348.60" width="7.70" height="10.70" fill="#56763a"/>
<rect x="410.44" y="348.60" width="7.70" height="10.70" fill="#8fb765"/>
<rect x="418.09" y="348.60" width="8.45" height="10.70" fill="#b9e77c"/>
<rect x="402.79" y="394.50" width="41.80" height="10.70" fill="#454545"/>
<rect x="402.79" y="409.80" width="41.80" height="10.70" fill="#454545"/>
<rect x="402.79" y="409.80" width="7.70" height="10.70" fill="#56763a"/>
<rect x="410.44" y="409.80" width="7.70" height="10.70" fill="#8fb765"/>
<rect x="418.09" y="409.80" width="7.70" height="10.70" fill="#b3e27a"/>
<rect x="425.74" y="409.80" width="7.70" height="10.70" fill="#c6ef7c"/>
<rect x="433.39" y="409.80" width="11.20" height="10.70" fill="#d6f97e"/>
<rect x="1020.62" y="329.90" width="7.70" height="14.70" fill="#d2d2d2"/>
<rect x="938.91" y="343.60" width="1.90" height="1.90" fill="#5a5f5c"/>
<rect x="946.56" y="343.60" width="1.90" height="1.90" fill="#5a5f5c"/>
<rect x="954.16" y="343.55" width="2.00" height="2.00" fill="#a9e6c6"/>
<rect x="957.76" y="343.55" width="2.00" height="2.00" fill="#a9e6c6"/>
<rect x="961.81" y="343.55" width="2.00" height="2.00" fill="#a9e6c6"/>
<rect x="965.41" y="343.55" width="2.00" height="2.00" fill="#a9e6c6"/>
<rect x="969.46" y="343.55" width="2.00" height="2.00" fill="#a9e6c6"/>
<rect x="973.06" y="343.55" width="2.00" height="2.00" fill="#a9e6c6"/>
<rect x="938.91" y="358.90" width="1.90" height="1.90" fill="#595d5a"/>
<rect x="946.56" y="358.90" width="1.90" height="1.90" fill="#595d5a"/>
<rect x="954.21" y="358.90" width="1.90" height="1.90" fill="#595d5a"/>
<rect x="961.86" y="358.90" width="1.90" height="1.90" fill="#595d5a"/>
<rect x="969.51" y="358.90" width="1.90" height="1.90" fill="#595d5a"/>
<rect x="938.91" y="374.20" width="1.90" height="1.90" fill="#575c59"/>
<rect x="946.56" y="374.20" width="1.90" height="1.90" fill="#575c59"/>
<rect x="954.16" y="374.15" width="2.00" height="2.00" fill="#9fd6b9"/>
<rect x="961.81" y="374.15" width="2.00" height="2.00" fill="#9fd6b9"/>
<rect x="969.46" y="374.15" width="2.00" height="2.00" fill="#9fd6b9"/>
<rect x="938.91" y="389.50" width="1.90" height="1.90" fill="#565a57"/>
<rect x="946.56" y="389.50" width="1.90" height="1.90" fill="#565a57"/>
<rect x="954.21" y="389.50" width="1.90" height="1.90" fill="#565a57"/>
<rect x="961.86" y="389.50" width="1.90" height="1.90" fill="#565a57"/>
<rect x="969.51" y="389.50" width="1.90" height="1.90" fill="#565a57"/>
<rect x="938.91" y="404.80" width="1.90" height="1.90" fill="#545856"/>
<rect x="946.56" y="404.80" width="1.90" height="1.90" fill="#545856"/>
<rect x="954.21" y="404.80" width="1.90" height="1.90" fill="#545856"/>
<rect x="961.86" y="404.80" width="1.90" height="1.90" fill="#545856"/>
<rect x="969.51" y="404.80" width="1.90" height="1.90" fill="#545856"/>
<rect x="938.91" y="420.10" width="1.90" height="1.90" fill="#535754"/>
<rect x="946.56" y="420.10" width="1.90" height="1.90" fill="#535754"/>
<rect x="954.21" y="420.10" width="1.90" height="1.90" fill="#535754"/>
<rect x="969.51" y="420.10" width="1.90" height="1.90" fill="#535754"/>
<rect x="961.81" y="420.05" width="2.00" height="2.00" fill="#90bea6"/>
<rect x="938.91" y="435.40" width="1.90" height="1.90" fill="#515553"/>
<rect x="946.56" y="435.40" width="1.90" height="1.90" fill="#515553"/>
<rect x="954.21" y="435.40" width="1.90" height="1.90" fill="#515553"/>
<rect x="961.86" y="435.40" width="1.90" height="1.90" fill="#515553"/>
<rect x="969.51" y="435.40" width="1.90" height="1.90" fill="#515553"/>
<rect x="938.91" y="450.70" width="1.90" height="1.90" fill="#505351"/>
<rect x="946.56" y="450.70" width="1.90" height="1.90" fill="#505351"/>
<rect x="954.21" y="450.70" width="1.90" height="1.90" fill="#505351"/>
<rect x="969.51" y="450.70" width="1.90" height="1.90" fill="#505351"/>
<rect x="961.81" y="450.65" width="2.00" height="2.00" fill="#86af99"/>
<rect x="938.91" y="466.00" width="1.90" height="1.90" fill="#4f5250"/>
<rect x="946.56" y="466.00" width="1.90" height="1.90" fill="#4f5250"/>
<rect x="954.21" y="466.00" width="1.90" height="1.90" fill="#4f5250"/>
<rect x="961.86" y="466.00" width="1.90" height="1.90" fill="#4f5250"/>
<rect x="969.51" y="466.00" width="1.90" height="1.90" fill="#4f5250"/>
<rect x="938.91" y="481.30" width="1.90" height="1.90" fill="#4d504e"/>
<rect x="946.56" y="481.30" width="1.90" height="1.90" fill="#4d504e"/>
<rect x="954.21" y="481.30" width="1.90" height="1.90" fill="#4d504e"/>
<rect x="961.86" y="481.30" width="1.90" height="1.90" fill="#4d504e"/>
<rect x="969.51" y="481.30" width="1.90" height="1.90" fill="#4d504e"/>
<rect x="938.91" y="496.60" width="1.90" height="1.90" fill="#4c4e4d"/>
<rect x="946.56" y="496.60" width="1.90" height="1.90" fill="#4c4e4d"/>
<rect x="954.21" y="496.60" width="1.90" height="1.90" fill="#4c4e4d"/>
<rect x="961.86" y="496.60" width="1.90" height="1.90" fill="#4c4e4d"/>
<rect x="969.51" y="496.60" width="1.90" height="1.90" fill="#4c4e4d"/>
<rect x="938.91" y="511.90" width="1.90" height="1.90" fill="#4a4d4b"/>
<rect x="946.56" y="511.90" width="1.90" height="1.90" fill="#4a4d4b"/>
<rect x="954.21" y="511.90" width="1.90" height="1.90" fill="#4a4d4b"/>
<rect x="961.86" y="511.90" width="1.90" height="1.90" fill="#4a4d4b"/>
<rect x="969.51" y="511.90" width="1.90" height="1.90" fill="#4a4d4b"/>
<rect x="938.91" y="527.20" width="1.90" height="1.90" fill="#494b4a"/>
<rect x="946.56" y="527.20" width="1.90" height="1.90" fill="#494b4a"/>
<rect x="954.21" y="527.20" width="1.90" height="1.90" fill="#494b4a"/>
<rect x="961.86" y="527.20" width="1.90" height="1.90" fill="#494b4a"/>
<rect x="969.51" y="527.20" width="1.90" height="1.90" fill="#494b4a"/>
<rect x="938.91" y="542.50" width="1.90" height="1.90" fill="#474948"/>
<rect x="946.56" y="542.50" width="1.90" height="1.90" fill="#474948"/>
<rect x="954.21" y="542.50" width="1.90" height="1.90" fill="#474948"/>
<rect x="961.86" y="542.50" width="1.90" height="1.90" fill="#474948"/>
<rect x="969.51" y="542.50" width="1.90" height="1.90" fill="#474948"/>
<rect x="938.91" y="557.80" width="1.90" height="1.90" fill="#464847"/>
<rect x="946.56" y="557.80" width="1.90" height="1.90" fill="#464847"/>
<rect x="954.21" y="557.80" width="1.90" height="1.90" fill="#464847"/>
<rect x="961.86" y="557.80" width="1.90" height="1.90" fill="#464847"/>
<rect x="969.51" y="557.80" width="1.90" height="1.90" fill="#464847"/>
<rect x="938.91" y="573.10" width="1.90" height="1.90" fill="#454645"/>
<rect x="946.56" y="573.10" width="1.90" height="1.90" fill="#454645"/>
<rect x="954.21" y="573.10" width="1.90" height="1.90" fill="#454645"/>
<rect x="961.86" y="573.10" width="1.90" height="1.90" fill="#454645"/>
<rect x="969.51" y="573.10" width="1.90" height="1.90" fill="#454645"/>
<rect x="938.91" y="588.40" width="1.90" height="1.90" fill="#434444"/>
<rect x="946.56" y="588.40" width="1.90" height="1.90" fill="#434444"/>
<rect x="954.21" y="588.40" width="1.90" height="1.90" fill="#434444"/>
<rect x="961.86" y="588.40" width="1.90" height="1.90" fill="#434444"/>
<rect x="969.51" y="588.40" width="1.90" height="1.90" fill="#434444"/>
<rect x="938.91" y="603.70" width="1.90" height="1.90" fill="#424342"/>
<rect x="946.56" y="603.70" width="1.90" height="1.90" fill="#424342"/>
<rect x="954.21" y="603.70" width="1.90" height="1.90" fill="#424342"/>
<rect x="961.86" y="603.70" width="1.90" height="1.90" fill="#424342"/>
<rect x="969.51" y="603.70" width="1.90" height="1.90" fill="#424342"/>
<rect x="938.91" y="619.00" width="1.90" height="1.90" fill="#404141"/>
<rect x="946.56" y="619.00" width="1.90" height="1.90" fill="#404141"/>
<rect x="954.21" y="619.00" width="1.90" height="1.90" fill="#404141"/>
<rect x="961.86" y="619.00" width="1.90" height="1.90" fill="#404141"/>
<rect x="969.51" y="619.00" width="1.90" height="1.90" fill="#404141"/>
<rect x="938.91" y="634.30" width="1.90" height="1.90" fill="#3f3f3f"/>
<rect x="946.56" y="634.30" width="1.90" height="1.90" fill="#3f3f3f"/>
<rect x="954.21" y="634.30" width="1.90" height="1.90" fill="#3f3f3f"/>
<rect x="961.86" y="634.30" width="1.90" height="1.90" fill="#3f3f3f"/>
<rect x="969.51" y="634.30" width="1.90" height="1.90" fill="#3f3f3f"/>
<rect x="938.91" y="649.60" width="1.90" height="1.90" fill="#3d3e3e"/>
<rect x="946.56" y="649.60" width="1.90" height="1.90" fill="#3d3e3e"/>
<rect x="954.21" y="649.60" width="1.90" height="1.90" fill="#3d3e3e"/>
<rect x="961.86" y="649.60" width="1.90" height="1.90" fill="#3d3e3e"/>
<rect x="969.51" y="649.60" width="1.90" height="1.90" fill="#3d3e3e"/>
</svg>
<div class="tt"><span class="t" style="left:125.75px;top:132.30px;color:#eeeeee;font-weight:bold;">cpu</span>
<span class="t" style="left:186.96px;top:132.30px;color:#958a9a;font-weight:bold;">M</span>
<span class="t" style="left:194.61px;top:132.30px;color:#eeeeee;font-weight:bold;">enu</span>
<span class="t" style="left:232.87px;top:132.30px;color:#958a9a;">m</span>
<span class="t" style="left:240.52px;top:132.30px;color:#d8d8d8;">ini</span>
<span class="t" style="left:523.61px;top:132.30px;color:#eeeeee;font-weight:bold;">10:01:37</span>
<span class="t" style="left:944.41px;top:132.30px;color:#958a9a;">+</span>
<span class="t" style="left:959.71px;top:132.30px;color:#eeeeee;font-weight:bold;">2000ms</span>
<span class="t" style="left:1013.27px;top:132.30px;color:#958a9a;">-</span>
<span class="t" style="left:118.10px;top:270.00px;color:#686868;">up 0:04</span>
<span class="t" style="left:883.20px;top:178.20px;color:#eeeeee;font-weight:bold;">i7-8700</span>
<span class="t" style="left:867.90px;top:193.50px;color:#eeeeee;font-weight:bold;">CPU</span>
<span class="t" style="left:997.97px;top:193.50px;color:#5fd98a;">4%</span>
<span class="t" style="left:867.90px;top:208.80px;color:#eeeeee;font-weight:bold;">C1</span>
<span class="t" style="left:997.97px;top:208.80px;color:#5fd98a;">4%</span>
<span class="t" style="left:867.90px;top:224.10px;color:#b4b4b4;">LAV: 0.07 0.23 0.11</span>
<span class="t" style="left:125.75px;top:300.60px;color:#eeeeee;font-weight:bold;">mem</span>
<span class="t" style="left:255.82px;top:300.60px;color:#958a9a;font-weight:bold;">g</span>
<span class="t" style="left:263.47px;top:300.60px;color:#eeeeee;font-weight:bold;">raph</span>
<span class="t" style="left:332.33px;top:300.60px;color:#eeeeee;font-weight:bold;">disks</span>
<span class="t" style="left:470.05px;top:300.60px;color:#958a9a;font-weight:bold;">s</span>
<span class="t" style="left:477.70px;top:300.60px;color:#eeeeee;font-weight:bold;">wap</span>
<span class="t" style="left:118.10px;top:315.90px;color:#eeeeee;font-weight:bold;">Total:</span>
<span class="t" style="left:240.52px;top:315.90px;color:#eeeeee;font-weight:bold;">1.92 GiB</span>
<span class="t" style="left:118.10px;top:331.20px;color:#cccccc;">Used:</span>
<span class="t" style="left:240.52px;top:331.20px;color:#cccccc;">1.09 GiB</span>
<span class="t" style="left:118.10px;top:346.50px;color:#cccccc;"> 57%</span>
<span class="t" style="left:118.10px;top:377.10px;color:#cccccc;">Available:</span>
<span class="t" style="left:248.17px;top:377.10px;color:#cccccc;">840 MiB</span>
<span class="t" style="left:118.10px;top:392.40px;color:#cccccc;"> 43%</span>
<span class="t" style="left:118.10px;top:423.00px;color:#cccccc;">Cached:</span>
<span class="t" style="left:248.17px;top:423.00px;color:#cccccc;">765 MiB</span>
<span class="t" style="left:118.10px;top:438.30px;color:#cccccc;"> 39%</span>
<span class="t" style="left:118.10px;top:468.90px;color:#cccccc;">Free:</span>
<span class="t" style="left:248.17px;top:468.90px;color:#cccccc;">197 MiB</span>
<span class="t" style="left:118.10px;top:484.20px;color:#cccccc;"> 10%</span>
<span class="t" style="left:332.33px;top:315.90px;color:#eeeeee;font-weight:bold;">root</span>
<span class="t" style="left:447.10px;top:315.90px;color:#eeeeee;font-weight:bold;">18.1 GiB</span>
<span class="t" style="left:332.33px;top:377.10px;color:#eeeeee;font-weight:bold;">swap</span>
<span class="t" style="left:454.75px;top:377.10px;color:#eeeeee;font-weight:bold;">979 MiB</span>
<span class="t" style="left:324.68px;top:331.20px;color:#cccccc;">Used: 30%</span>
<span class="t" style="left:447.10px;top:331.20px;color:#cccccc;">5.24 GiB</span>
<span class="t" style="left:324.68px;top:346.50px;color:#cccccc;">Free: 70%</span>
<span class="t" style="left:447.10px;top:346.50px;color:#cccccc;">12.0 GiB</span>
<span class="t" style="left:324.68px;top:392.40px;color:#cccccc;">Used:  0%</span>
<span class="t" style="left:462.40px;top:392.40px;color:#cccccc;">0 Byte</span>
<span class="t" style="left:324.68px;top:407.70px;color:#cccccc;">Free:100%</span>
<span class="t" style="left:454.75px;top:407.70px;color:#cccccc;">979 MiB</span>
<span class="t" style="left:125.75px;top:530.10px;color:#eeeeee;font-weight:bold;">net</span>
<span class="t" style="left:324.68px;top:530.10px;color:#958a9a;font-weight:bold;">a</span>
<span class="t" style="left:332.33px;top:530.10px;color:#eeeeee;font-weight:bold;">uto</span>
<span class="t" style="left:370.58px;top:530.10px;color:#958a9a;">z</span>
<span class="t" style="left:378.24px;top:530.10px;color:#d8d8d8;">ero</span>
<span class="t" style="left:416.49px;top:530.10px;color:#958a9a;">&lt;b</span>
<span class="t" style="left:439.44px;top:530.10px;color:#eeeeee;font-weight:bold;">ens33</span>
<span class="t" style="left:485.35px;top:530.10px;color:#958a9a;">n&gt;</span>
<span class="t" style="left:110.45px;top:545.40px;color:#686868;">10K</span>
<span class="t" style="left:110.45px;top:637.20px;color:#686868;">10K</span>
<span class="t" style="left:324.68px;top:545.40px;color:#eeeeee;font-weight:bold;">Download</span>
<span class="t" style="left:324.68px;top:637.20px;color:#eeeeee;font-weight:bold;">Upload</span>
<span class="t" style="left:324.68px;top:560.70px;color:#cccccc;">0 Byte/s</span>
<span class="t" style="left:431.79px;top:560.70px;color:#cccccc;">(0 bitps)</span>
<span class="t" style="left:324.68px;top:576.00px;color:#cccccc;">Total:</span>
<span class="t" style="left:439.44px;top:576.00px;color:#cccccc;">7.11 MiB</span>
<span class="t" style="left:324.68px;top:606.60px;color:#cccccc;">0 Byte/s</span>
<span class="t" style="left:431.79px;top:606.60px;color:#cccccc;">(0 bitps)</span>
<span class="t" style="left:324.68px;top:621.90px;color:#cccccc;">Total:</span>
<span class="t" style="left:447.10px;top:621.90px;color:#cccccc;">166 KiB</span>
<span class="t" style="left:309.38px;top:560.70px;color:#d0d0d0;font-family:'DejaVu Sans',sans-serif;font-size:15px;letter-spacing:0;width:15.65px;text-align:center;margin-left:-2.1px;margin-top:-1.2px;">▼</span>
<span class="t" style="left:309.38px;top:576.00px;color:#d0d0d0;font-family:'DejaVu Sans',sans-serif;font-size:15px;letter-spacing:0;width:15.65px;text-align:center;margin-left:-2.1px;margin-top:-1.2px;">▼</span>
<span class="t" style="left:309.38px;top:606.60px;color:#d0d0d0;font-family:'DejaVu Sans',sans-serif;font-size:15px;letter-spacing:0;width:15.65px;text-align:center;margin-left:-2.1px;margin-top:-1.2px;">▲</span>
<span class="t" style="left:309.38px;top:621.90px;color:#d0d0d0;font-family:'DejaVu Sans',sans-serif;font-size:15px;letter-spacing:0;width:15.65px;text-align:center;margin-left:-2.1px;margin-top:-1.2px;">▲</span>
<span class="t" style="left:546.56px;top:300.60px;color:#eeeeee;font-weight:bold;">proc</span>
<span class="t" style="left:600.12px;top:300.60px;color:#958a9a;">f</span>
<span class="t" style="left:607.77px;top:300.60px;color:#d8d8d8;">ilter</span>
<span class="t" style="left:730.18px;top:300.60px;color:#d8d8d8;">per-</span>
<span class="t" style="left:760.79px;top:300.60px;color:#958a9a;">c</span>
<span class="t" style="left:768.44px;top:300.60px;color:#d8d8d8;">ore</span>
<span class="t" style="left:806.69px;top:300.60px;color:#958a9a;">r</span>
<span class="t" style="left:814.34px;top:300.60px;color:#d8d8d8;">everse</span>
<span class="t" style="left:875.55px;top:300.60px;color:#d8d8d8;">tre</span>
<span class="t" style="left:898.50px;top:300.60px;color:#958a9a;">e</span>
<span class="t" style="left:921.46px;top:300.60px;color:#958a9a;">&lt;</span>
<span class="t" style="left:936.76px;top:300.60px;color:#eeeeee;font-weight:bold;">cpu lazy</span>
<span class="t" style="left:1005.62px;top:300.60px;color:#958a9a;">&gt;</span>
<span class="t" style="left:554.21px;top:315.90px;color:#eeeeee;font-weight:bold;">Pid:</span>
<span class="t" style="left:592.46px;top:315.90px;color:#eeeeee;font-weight:bold;">Program:</span>
<span class="t" style="left:799.04px;top:315.90px;color:#eeeeee;font-weight:bold;">Tr:</span>
<span class="t" style="left:829.64px;top:315.90px;color:#eeeeee;font-weight:bold;">User:</span>
<span class="t" style="left:898.50px;top:315.90px;color:#eeeeee;font-weight:bold;">MemB</span>
<span class="t" style="left:982.66px;top:315.90px;color:#eeeeee;font-weight:bold;text-decoration:underline;">Cpu</span>
<span class="t" style="left:1005.62px;top:315.90px;color:#eeeeee;font-weight:bold;">%</span>
<span class="t" style="left:1020.92px;top:315.90px;color:#eeeeee;font-family:'DejaVu Sans',sans-serif;font-size:13px;letter-spacing:0;width:13.65px;text-align:center;margin-left:-0.6px;">↑</span>
<span class="t" style="left:1020.92px;top:637.20px;color:#eeeeee;font-family:'DejaVu Sans',sans-serif;font-size:13px;letter-spacing:0;width:13.65px;text-align:center;margin-left:-0.6px;">↓</span>
<span class="t" style="left:554.21px;top:331.20px;color:#cccccc;">4540</span>
<span class="t" style="left:592.46px;top:331.20px;color:#80d0a3;">python3</span>
<span class="t" style="left:814.34px;top:331.20px;color:#cccccc;">3</span>
<span class="t" style="left:829.64px;top:331.20px;color:#cccccc;">bob</span>
<span class="t" style="left:906.15px;top:331.20px;color:#80d0a3;">26M</span>
<span class="t" style="left:990.32px;top:331.20px;color:#80d0a3;">3.0</span>
<span class="t" style="left:554.21px;top:346.50px;color:#c5c5c5;">3674</span>
<span class="t" style="left:592.46px;top:346.50px;color:#7dc99e;">update-manager</span>
<span class="t" style="left:814.34px;top:346.50px;color:#c5c5c5;">4</span>
<span class="t" style="left:829.64px;top:346.50px;color:#c5c5c5;">bob</span>
<span class="t" style="left:898.50px;top:346.50px;color:#7dc99e;">161M</span>
<span class="t" style="left:990.32px;top:346.50px;color:#7dc99e;">0.0</span>
<span class="t" style="left:554.21px;top:361.80px;color:#bfbfbf;">1475</span>
<span class="t" style="left:592.46px;top:361.80px;color:#7ac29a;">gnome-shell</span>
<span class="t" style="left:806.69px;top:361.80px;color:#bfbfbf;">10</span>
<span class="t" style="left:829.64px;top:361.80px;color:#bfbfbf;">bob</span>
<span class="t" style="left:898.50px;top:361.80px;color:#7ac29a;">183M</span>
<span class="t" style="left:990.32px;top:361.80px;color:#7ac29a;">0.5</span>
<span class="t" style="left:554.21px;top:377.10px;color:#b8b8b8;">1588</span>
<span class="t" style="left:592.46px;top:377.10px;color:#77bb95;">packagekitd</span>
<span class="t" style="left:814.34px;top:377.10px;color:#b8b8b8;">3</span>
<span class="t" style="left:829.64px;top:377.10px;color:#b8b8b8;">root</span>
<span class="t" style="left:906.15px;top:377.10px;color:#77bb95;">19M</span>
<span class="t" style="left:990.32px;top:377.10px;color:#77bb95;">0.0</span>
<span class="t" style="left:554.21px;top:392.40px;color:#b1b1b1;">3593</span>
<span class="t" style="left:592.46px;top:392.40px;color:#74b590;">gnome-software</span>
<span class="t" style="left:814.34px;top:392.40px;color:#b1b1b1;">4</span>
<span class="t" style="left:829.64px;top:392.40px;color:#b1b1b1;">bob</span>
<span class="t" style="left:898.50px;top:392.40px;color:#74b590;">117M</span>
<span class="t" style="left:990.32px;top:392.40px;color:#74b590;">0.0</span>
<span class="t" style="left:554.21px;top:407.70px;color:#ababab;">1074</span>
<span class="t" style="left:592.46px;top:407.70px;color:#71ae8b;">Xorg</span>
<span class="t" style="left:814.34px;top:407.70px;color:#ababab;">2</span>
<span class="t" style="left:829.64px;top:407.70px;color:#ababab;">bob</span>
<span class="t" style="left:906.15px;top:407.70px;color:#71ae8b;">69M</span>
<span class="t" style="left:990.32px;top:407.70px;color:#71ae8b;">0.5</span>
<span class="t" style="left:577.16px;top:423.00px;color:#a4a4a4;">1</span>
<span class="t" style="left:592.46px;top:423.00px;color:#6ea787;">systemd</span>
<span class="t" style="left:814.34px;top:423.00px;color:#a4a4a4;">1</span>
<span class="t" style="left:829.64px;top:423.00px;color:#a4a4a4;">root</span>
<span class="t" style="left:913.81px;top:423.00px;color:#6ea787;">9M</span>
<span class="t" style="left:990.32px;top:423.00px;color:#6ea787;">0.0</span>
<span class="t" style="left:554.21px;top:438.30px;color:#9d9d9d;">2030</span>
<span class="t" style="left:592.46px;top:438.30px;color:#6ba082;">gnome-terminal-server</span>
<span class="t" style="left:814.34px;top:438.30px;color:#9d9d9d;">4</span>
<span class="t" style="left:829.64px;top:438.30px;color:#9d9d9d;">bob</span>
<span class="t" style="left:906.15px;top:438.30px;color:#6ba082;">40M</span>
<span class="t" style="left:990.32px;top:438.30px;color:#6ba082;">0.0</span>
<span class="t" style="left:561.86px;top:453.60px;color:#979797;">890</span>
<span class="t" style="left:592.46px;top:453.60px;color:#68997d;">snapd</span>
<span class="t" style="left:806.69px;top:453.60px;color:#979797;">12</span>
<span class="t" style="left:829.64px;top:453.60px;color:#979797;">root</span>
<span class="t" style="left:906.15px;top:453.60px;color:#68997d;">34M</span>
<span class="t" style="left:990.32px;top:453.60px;color:#68997d;">0.0</span>
<span class="t" style="left:554.21px;top:468.90px;color:#909090;">1692</span>
<span class="t" style="left:592.46px;top:468.90px;color:#659279;">nautilus-desktop</span>
<span class="t" style="left:814.34px;top:468.90px;color:#909090;">4</span>
<span class="t" style="left:829.64px;top:468.90px;color:#909090;">bob</span>
<span class="t" style="left:906.15px;top:468.90px;color:#659279;">49M</span>
<span class="t" style="left:990.32px;top:468.90px;color:#659279;">0.0</span>
<span class="t" style="left:561.86px;top:484.20px;color:#898989;">342</span>
<span class="t" style="left:592.46px;top:484.20px;color:#628b74;">kworker/0:1H-kblockd</span>
<span class="t" style="left:814.34px;top:484.20px;color:#898989;">1</span>
<span class="t" style="left:829.64px;top:484.20px;color:#898989;">root</span>
<span class="t" style="left:913.81px;top:484.20px;color:#628b74;">0B</span>
<span class="t" style="left:990.32px;top:484.20px;color:#628b74;">0.0</span>
<span class="t" style="left:554.21px;top:499.50px;color:#838383;">1691</span>
<span class="t" style="left:592.46px;top:499.50px;color:#5e856f;">vmtoolsd</span>
<span class="t" style="left:814.34px;top:499.50px;color:#838383;">2</span>
<span class="t" style="left:829.64px;top:499.50px;color:#838383;">bob</span>
<span class="t" style="left:906.15px;top:499.50px;color:#5e856f;">31M</span>
<span class="t" style="left:990.32px;top:499.50px;color:#5e856f;">0.0</span>
<span class="t" style="left:554.21px;top:514.80px;color:#7c7c7c;">1754</span>
<span class="t" style="left:592.46px;top:514.80px;color:#5b7e6a;">evolution-calendar-factor</span>
<span class="t" style="left:814.34px;top:514.80px;color:#7c7c7c;">5</span>
<span class="t" style="left:829.64px;top:514.80px;color:#7c7c7c;">bob</span>
<span class="t" style="left:906.15px;top:514.80px;color:#5b7e6a;">65M</span>
<span class="t" style="left:990.32px;top:514.80px;color:#5b7e6a;">0.0</span>
<span class="t" style="left:554.21px;top:530.10px;color:#757575;">1508</span>
<span class="t" style="left:592.46px;top:530.10px;color:#587766;">ibus-daemon</span>
<span class="t" style="left:814.34px;top:530.10px;color:#757575;">3</span>
<span class="t" style="left:829.64px;top:530.10px;color:#757575;">bob</span>
<span class="t" style="left:906.15px;top:530.10px;color:#587766;">10M</span>
<span class="t" style="left:990.32px;top:530.10px;color:#587766;">0.0</span>
<span class="t" style="left:561.86px;top:545.40px;color:#6f6f6f;">859</span>
<span class="t" style="left:592.46px;top:545.40px;color:#557061;">dbus-daemon</span>
<span class="t" style="left:814.34px;top:545.40px;color:#6f6f6f;">1</span>
<span class="t" style="left:829.64px;top:545.40px;color:#6f6f6f;">messageb+</span>
<span class="t" style="left:913.81px;top:545.40px;color:#557061;">5M</span>
<span class="t" style="left:990.32px;top:545.40px;color:#557061;">0.5</span>
<span class="t" style="left:561.86px;top:560.70px;color:#686868;">437</span>
<span class="t" style="left:592.46px;top:560.70px;color:#52695c;">systemd-journald</span>
<span class="t" style="left:814.34px;top:560.70px;color:#686868;">1</span>
<span class="t" style="left:829.64px;top:560.70px;color:#686868;">root</span>
<span class="t" style="left:906.15px;top:560.70px;color:#52695c;">18M</span>
<span class="t" style="left:990.32px;top:560.70px;color:#52695c;">0.0</span>
<span class="t" style="left:554.21px;top:576.00px;color:#616161;">1765</span>
<span class="t" style="left:592.46px;top:576.00px;color:#4f6258;">evolution-calendar-factor</span>
<span class="t" style="left:814.34px;top:576.00px;color:#616161;">9</span>
<span class="t" style="left:829.64px;top:576.00px;color:#616161;">bob</span>
<span class="t" style="left:906.15px;top:576.00px;color:#4f6258;">61M</span>
<span class="t" style="left:990.32px;top:576.00px;color:#4f6258;">0.0</span>
<span class="t" style="left:569.51px;top:591.30px;color:#5b5b5b;">10</span>
<span class="t" style="left:592.46px;top:591.30px;color:#4c5b53;">rcu_sched</span>
<span class="t" style="left:814.34px;top:591.30px;color:#5b5b5b;">1</span>
<span class="t" style="left:829.64px;top:591.30px;color:#5b5b5b;">root</span>
<span class="t" style="left:913.81px;top:591.30px;color:#4c5b53;">0B</span>
<span class="t" style="left:990.32px;top:591.30px;color:#4c5b53;">0.0</span>
<span class="t" style="left:554.21px;top:606.60px;color:#545454;">1256</span>
<span class="t" style="left:592.46px;top:606.60px;color:#49554e;">dbus-daemon</span>
<span class="t" style="left:814.34px;top:606.60px;color:#545454;">1</span>
<span class="t" style="left:829.64px;top:606.60px;color:#545454;">bob</span>
<span class="t" style="left:913.81px;top:606.60px;color:#49554e;">5M</span>
<span class="t" style="left:990.32px;top:606.60px;color:#49554e;">0.0</span>
<span class="t" style="left:569.51px;top:621.90px;color:#4d4d4d;">13</span>
<span class="t" style="left:592.46px;top:621.90px;color:#464e49;">kworker/0:1-events</span>
<span class="t" style="left:814.34px;top:621.90px;color:#4d4d4d;">1</span>
<span class="t" style="left:829.64px;top:621.90px;color:#4d4d4d;">root</span>
<span class="t" style="left:913.81px;top:621.90px;color:#464e49;">0B</span>
<span class="t" style="left:990.32px;top:621.90px;color:#464e49;">0.0</span>
<span class="t" style="left:554.21px;top:637.20px;color:#474747;">3631</span>
<span class="t" style="left:592.46px;top:637.20px;color:#434745;">fwupd</span>
<span class="t" style="left:814.34px;top:637.20px;color:#474747;">5</span>
<span class="t" style="left:829.64px;top:637.20px;color:#474747;">root</span>
<span class="t" style="left:906.15px;top:637.20px;color:#434745;">28M</span>
<span class="t" style="left:990.32px;top:637.20px;color:#434745;">0.0</span>
<span class="t" style="left:546.56px;top:652.50px;color:#747474;font-family:'DejaVu Sans',sans-serif;font-size:13px;letter-spacing:0;width:13.65px;text-align:center;margin-left:-3px;">↑</span>
<span class="t" style="left:561.86px;top:652.50px;color:#eeeeee;font-weight:bold;">select</span>
<span class="t" style="left:615.42px;top:652.50px;color:#eeeeee;font-family:'DejaVu Sans',sans-serif;font-size:13px;letter-spacing:0;width:13.65px;text-align:center;margin-left:-3px;">↓</span>
<span class="t" style="left:638.37px;top:652.50px;color:#686868;font-weight:bold;">i</span>
<span class="t" style="left:646.02px;top:652.50px;color:#737373;font-weight:bold;">nfo</span>
<span class="t" style="left:676.62px;top:652.50px;color:#737373;font-family:'DejaVu Sans',sans-serif;font-size:13px;letter-spacing:0;width:13.65px;text-align:center;margin-left:-3px;">↲</span>
<span class="t" style="left:699.58px;top:652.50px;color:#686868;font-weight:bold;">t</span>
<span class="t" style="left:707.23px;top:652.50px;color:#737373;font-weight:bold;">erminate</span>
<span class="t" style="left:783.74px;top:652.50px;color:#686868;font-weight:bold;">k</span>
<span class="t" style="left:791.39px;top:652.50px;color:#737373;font-weight:bold;">ill</span>
<span class="t" style="left:829.64px;top:652.50px;color:#686868;font-weight:bold;">i</span>
<span class="t" style="left:837.30px;top:652.50px;color:#737373;font-weight:bold;">nterrupt</span>
<span class="t" style="left:982.66px;top:652.50px;color:#eeeeee;font-weight:bold;">0/304</span></div>
<div class="wm" style="left:848.8px;top:687.9px;font-size:26px;transform:scaleX(1.07)">STM32/STM8<span style="font-size:22.3px">社区</span></div>
<div class="wm" style="left:847.6px;top:712px;font-size:23.3px;transform:scaleX(1.092)">www.stmcu.org.cn</div>

</body></html>
